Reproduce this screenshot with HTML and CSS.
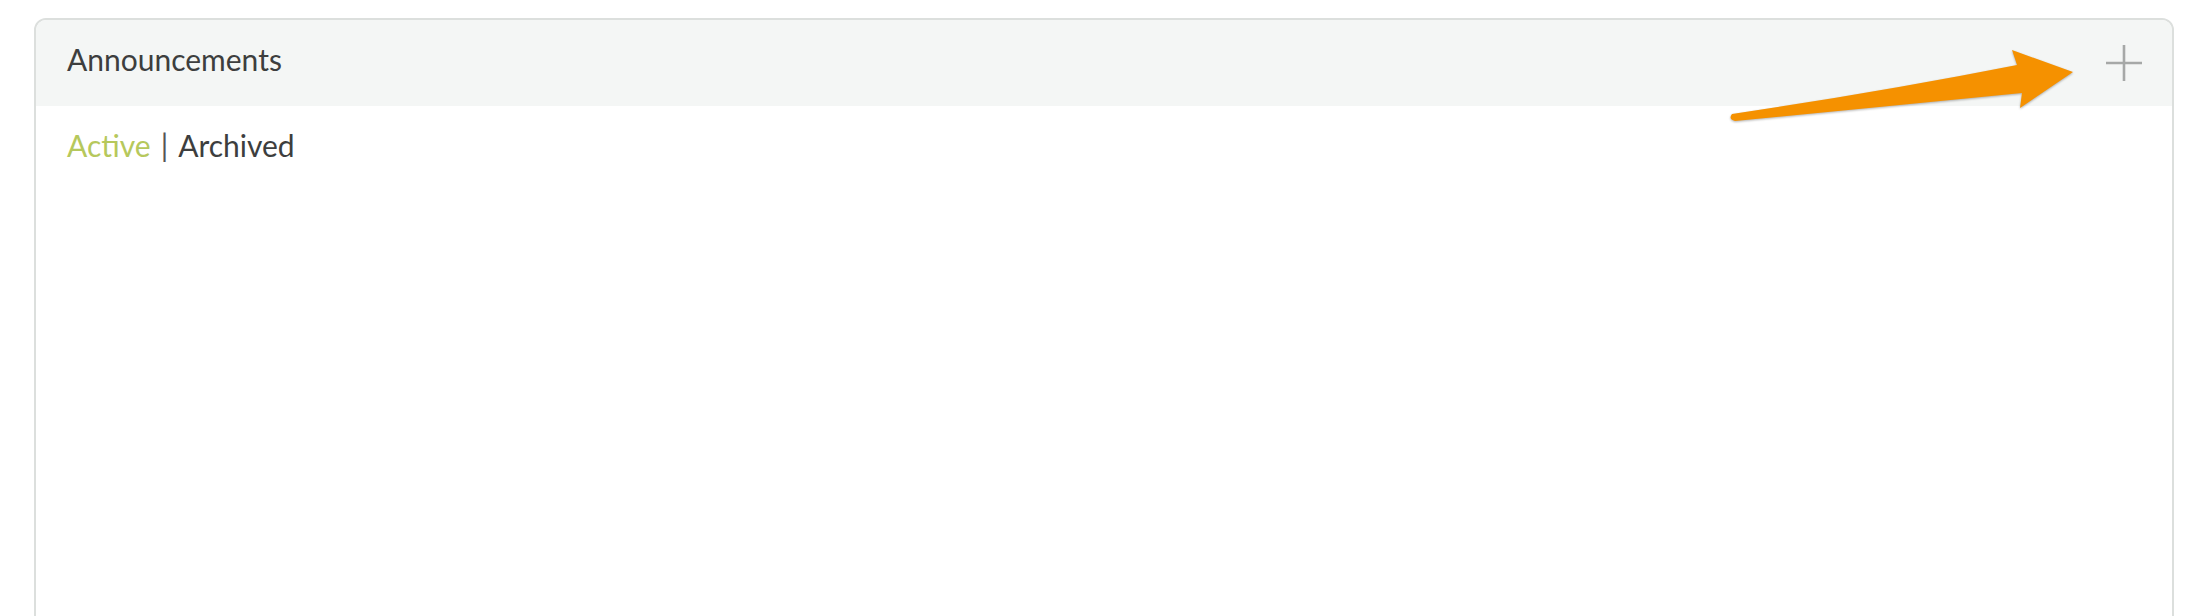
FILE: index.html
```html
<!DOCTYPE html>
<html lang="en">
<head>
  <meta charset="UTF-8"/>
  <title>Announcements</title>
  <link rel="stylesheet" href="styles.css">
</head>
<body>

<!-- announcements panel -->
<section class="panel">
  <header class="panel-head">
    <h2 class="panel-title">Announcements</h2>
    <button class="add-btn" title="New announcement">
      <svg width="38" height="38" viewBox="0 0 38 38"><path d="M19 1V37M1 19H37" stroke="#a6a8a7" stroke-width="2.6" fill="none"/></svg>
    </button>
  </header>
  <div class="panel-body">
    <nav class="filter">
      <a class="filter-link active" href="#">Active</a>
      <span class="sep">|</span>
      <a class="filter-link" href="#">Archived</a>
    </nav>
  </div>
</section>

<!-- annotation arrow -->
<svg class="callout" width="370" height="90" viewBox="0 0 370 90">
  <path d="M12 74 Q160 52 297 25 L292 10 L353 32 L300 68 L302 53 Q160 67 15 81 Q8 79 12 74 Z" fill="#f59100"/>
</svg>

</body>
</html>
```

FILE: styles.css
```css
*{box-sizing:border-box}
body{margin:0;height:100vh;overflow:hidden;position:relative;padding:18px 14px 0 34px;background:#fff;font-family:Lato,"Open Sans",sans-serif;color:#3d3e3e}
.panel{height:640px;border:2px solid #dcdfdd;border-radius:12px 12px 0 0;overflow:hidden;background:#fff}
.panel-head{height:86px;background:#f4f6f5;display:flex;align-items:center;justify-content:space-between;padding:0 29px 0 31px}
.panel-title{margin:0 0 8px;font-size:30px;font-weight:400;letter-spacing:0}
.add-btn{border:none;background:none;padding:0;display:flex;cursor:pointer}
.panel-body{padding:21px 31px}
.filter{font-size:30px;display:flex;gap:10px}
.filter-link{color:#3d3e3e;text-decoration:none}
.filter-link.active{color:#b6c85c}
.sep{color:#555}
.callout{position:absolute;left:1720px;top:40px;filter:drop-shadow(0 1px 1px rgba(0,0,0,.3))}
```
